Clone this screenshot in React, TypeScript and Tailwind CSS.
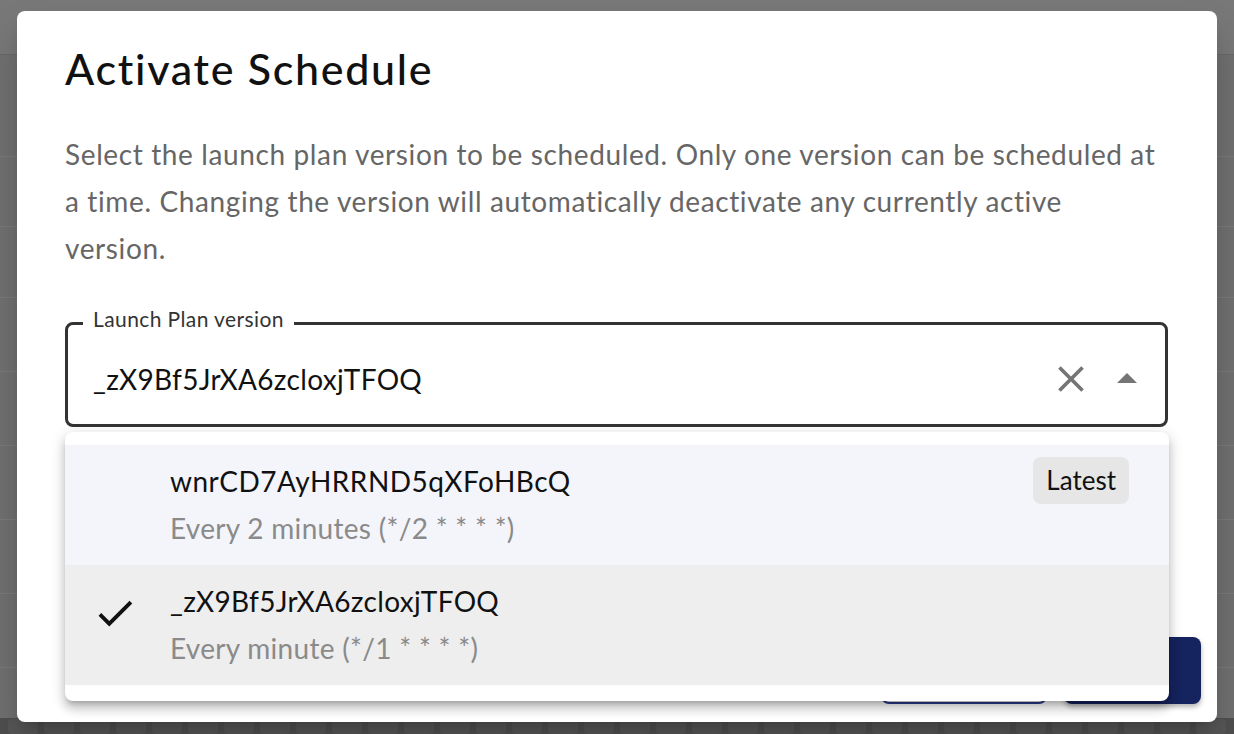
import React from "react";

function CheckIcon() {
  return (
    <svg viewBox="0 0 24 24" className="w-[46px] h-[46px]" fill="#111">
      <path d="M9 16.17 4.83 12l-1.42 1.41L9 19 21 7l-1.41-1.41z" />
    </svg>
  );
}

function CloseIcon() {
  return (
    <svg viewBox="0 0 24 24" className="w-[44px] h-[44px]" fill="#757575">
      <path d="M19 6.41 17.59 5 12 10.59 6.41 5 5 6.41 10.59 12 5 17.59 6.41 19 12 13.41 17.59 19 19 17.59 13.41 12z" />
    </svg>
  );
}

function ArrowUpIcon() {
  return (
    <svg viewBox="0 0 24 24" className="w-[48px] h-[48px]" fill="#757575">
      <path d="M7 14l5-5 5 5z" />
    </svg>
  );
}

export default function App() {
  const rows = [102, 70, 71, 74, 74, 74, 74, 74];
  const bumps = Array.from({ length: 34 });
  return (
    <div className="relative w-[1234px] h-[734px] overflow-hidden bg-[#707070] font-['Lato',sans-serif]">
      {/* page behind the modal */}
      <div className="flex flex-col h-full">
        <div className="h-[55px] shrink-0 bg-[#787878] border-b border-[#686868]" />
        {rows.map((h, i) => (
          <div
            key={i}
            style={{ height: h }}
            className="shrink-0 border-b border-[#7a7a7a]"
          />
        ))}
        <div className="mt-auto h-[16px] shrink-0 bg-[#4f4f4f] flex gap-[6px] px-[8px] pt-[1px]">
          {bumps.map((_, i) => (
            <div key={i} className="w-[30px] h-full rounded-[4px] bg-[#575757]" />
          ))}
        </div>
      </div>

      {/* modal */}
      <div className="absolute inset-0 flex justify-center pt-[11px]">
        <div className="w-[1200px] h-[711px] bg-white rounded-[8px] shadow-[0_11px_15px_-7px_rgba(0,0,0,0.2),0_24px_38px_3px_rgba(0,0,0,0.14)] flex flex-col pt-[32px] pb-[18px]">
          <div className="px-[48px] flex flex-col">
            <h2 className="text-[43px] leading-[52px] font-medium text-[#111] tracking-[1.7px]">
              Activate Schedule
            </h2>
            <p className="mt-[36px] text-[28px] leading-[47px] text-[#666] tracking-[0.62px]">
              Select the launch plan version to be scheduled. Only one version can be scheduled at
              <br />
              a time. Changing the version will automatically deactivate any currently active
              <br />
              version.
            </p>

            {/* select field */}
            <div className="relative mt-[50px] h-[105px] w-[1103px]">
              <div className="h-full rounded-[8px] border-[3px] border-[#333] flex items-center pt-[8px] pl-[25px] pr-[14px]">
                <span className="flex-1 text-[28px] leading-[34px] text-[#111] tracking-[0.3px]">
                  _zX9Bf5JrXA6zcloxjTFOQ
                </span>
                <CloseIcon />
                <div className="w-[10px]" />
                <ArrowUpIcon />
              </div>
              <span className="absolute left-[18px] top-[-15px] px-[10px] bg-white text-[21px] leading-[24px] text-[#333] tracking-[0.4px]">
                Launch Plan version
              </span>

              {/* dropdown popup */}
              <div className="absolute left-0 top-[110px] w-[1104px] h-[269px] z-10 bg-white rounded-[8px] shadow-[0_5px_5px_-3px_rgba(0,0,0,0.2),0_8px_10px_1px_rgba(0,0,0,0.14),0_3px_14px_2px_rgba(0,0,0,0.12)] pt-[13px] pb-[16px]">
                <div className="h-[120px] bg-[#f4f5fa] flex items-start pl-[27px] pr-[40px]">
                  <div className="w-[78px] shrink-0" />
                  <div className="flex-1 mt-[13px] flex flex-col">
                    <span className="text-[28px] leading-[47px] text-[#111] tracking-[0.5px]">
                      wnrCD7AyHRRND5qXFoHBcQ
                    </span>
                    <span className="text-[28px] leading-[47px] text-[#8a8a8a] tracking-[0.3px]">
                      Every 2 minutes (*/2 * * * *)
                    </span>
                  </div>
                  <div className="mt-[12px] h-[47px] px-[13px] rounded-[8px] bg-[#e6e6e7] flex items-center text-[26px] text-[#111]">
                    Latest
                  </div>
                </div>
                <div className="h-[120px] bg-[#eeeeee] flex items-center pl-[27px] pr-[40px]">
                  <div className="w-[78px] shrink-0 flex items-center mb-[25px]">
                    <CheckIcon />
                  </div>
                  <div className="flex-1 flex flex-col">
                    <span className="text-[28px] leading-[47px] text-[#111] tracking-[0.3px]">
                      _zX9Bf5JrXA6zcloxjTFOQ
                    </span>
                    <span className="text-[28px] leading-[47px] text-[#8a8a8a] tracking-[0.3px]">
                      Every minute (*/1 * * * *)
                    </span>
                  </div>
                </div>
              </div>
            </div>
          </div>

          {/* actions (hidden behind popup) */}
          <div className="mt-auto flex justify-end items-end gap-[17px] px-[16px]">
            <button
              aria-label="Cancel"
              className="w-[166px] h-[70px] rounded-[8px] border-2 border-[#2b3b8f] bg-white"
            />
            <button
              aria-label="Activate"
              className="w-[137px] h-[67px] rounded-[8px] bg-[#15235e] shadow-[0_3px_5px_rgba(0,0,0,0.3)]"
            />
          </div>
        </div>
      </div>
    </div>
  );
}
